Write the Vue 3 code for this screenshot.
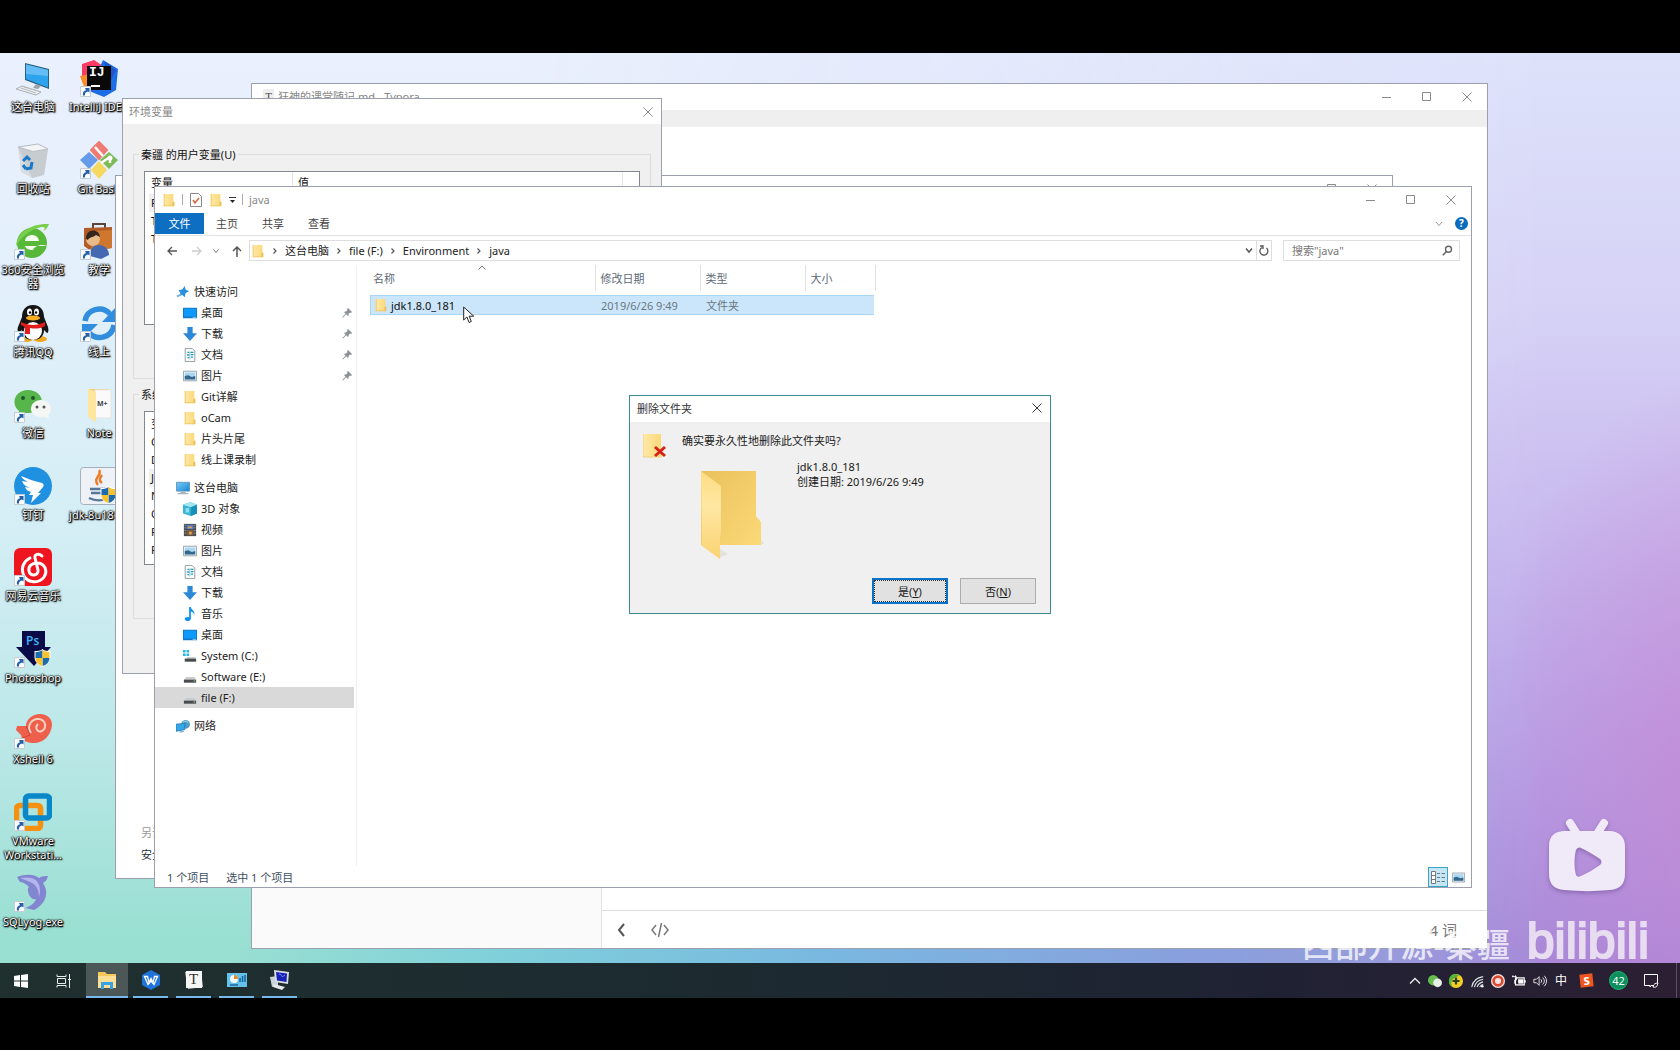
<script setup>
const leftIcons = [
  { id: 'd-pc', label: ['这台电脑'] },
  { id: 'd-bin', label: ['回收站'] },
  { id: 'd-360', label: ['360安全浏览', '器'], link: true },
  { id: 'd-qq', label: ['腾讯QQ'], link: true },
  { id: 'd-wechat', label: ['微信'], link: true },
  { id: 'd-ding', label: ['钉钉'], link: true },
  { id: 'd-music', label: ['网易云音乐'], link: true },
  { id: 'd-ps', label: ['Photoshop'], link: true, mark: 'Ps' },
  { id: 'd-xshell', label: ['Xshell 6'], link: true },
  { id: 'd-vm', label: ['VMware', 'Workstati...'], link: true },
  { id: 'd-sql', label: ['SQLyog.exe'], link: true },
]
const rightIcons = [
  { id: 'd-ij', label: ['IntelliJ IDEA'], link: true, mark: 'IJ' },
  { id: 'd-git', label: ['Git Bash'], link: true },
  { id: 'd-teach', label: ['教学'], link: true },
  { id: 'd-sync', label: ['线上'], link: true },
  { id: 'd-note', label: ['Note'], mark: 'M+' },
  { id: 'd-java', label: ['jdk-8u181...'] },
]
const navGroups = [
  {
    title: '快速访问', icon: 's-star',
    items: [
      { text: '桌面', icon: 's-desk', pin: true },
      { text: '下载', icon: 's-down', pin: true },
      { text: '文档', icon: 's-doc', pin: true },
      { text: '图片', icon: 's-pic', pin: true },
      { text: 'Git详解', icon: 's-folder' },
      { text: 'oCam', icon: 's-folder' },
      { text: '片头片尾', icon: 's-folder' },
      { text: '线上课录制', icon: 's-folder' },
    ],
  },
  {
    title: '这台电脑', icon: 's-pc',
    items: [
      { text: '3D 对象', icon: 's-cube' },
      { text: '视频', icon: 's-video' },
      { text: '图片', icon: 's-pic' },
      { text: '文档', icon: 's-doc' },
      { text: '下载', icon: 's-down' },
      { text: '音乐', icon: 's-note' },
      { text: '桌面', icon: 's-desk' },
      { text: 'System (C:)', icon: 's-sysdrive' },
      { text: 'Software (E:)', icon: 's-drive' },
      { text: 'file (F:)', icon: 's-drive', active: true },
    ],
  },
  { title: '网络', icon: 's-net', items: [] },
]
const crumbs = ['这台电脑', 'file (F:)', 'Environment', 'java']
const userVars = ['P', 'T', 'T']
const sysVars = ['变', 'C', 'D', 'J', 'N', 'O', 'P', 'P']
const tasks = ['t-folder', 't-wps', 't-typora', 't-panel', 't-remote']
const tray = ['y-wechat', 'y-plus', 'y-wifi', 'y-rec', 'y-batt', 'y-vol']
</script>

<template>
  <div class="screen">
    <svg class="sprite" width="0" height="0" aria-hidden="true">
      <defs>
        <linearGradient id="g-fold" x1="0" y1="0" x2="1" y2="0"><stop offset="0" stop-color="#ffe9a6" /><stop offset="1" stop-color="#fbd878" /></linearGradient>
        <linearGradient id="g-blue" x1="0" y1="0" x2="1" y2="1"><stop offset="0" stop-color="#7cc8f5" /><stop offset="1" stop-color="#1689d8" /></linearGradient>
        <linearGradient id="g-back" x1="0" y1="0" x2="1" y2="1"><stop offset="0" stop-color="#e9c15c" /><stop offset="1" stop-color="#fcd977" /></linearGradient>
        <linearGradient id="g-flap" x1="0" y1="0" x2="0" y2="1"><stop offset="0" stop-color="#fddc82" /><stop offset=".4" stop-color="#ffe7a3" /><stop offset="1" stop-color="#fbd372" /></linearGradient>
      </defs>
      <symbol id="w-min" viewBox="0 0 10 10"><path d="M0 5.500h9" stroke="currentColor" fill="none" /></symbol>
      <symbol id="w-max" viewBox="0 0 10 10"><path d="M.5.5h8v8h-8z" stroke="currentColor" fill="none" /></symbol>
      <symbol id="w-close" viewBox="0 0 10 10"><path d="M.5.5l9 9M9.500.5l-9 9" stroke="currentColor" fill="none" /></symbol>
      <symbol id="shield" viewBox="0 0 16 18"><path d="M8 0c2 2 5 2 8 2v6c0 5-4 8-8 10C4 16 0 13 0 8V2c3 0 6 0 8-2z" fill="#fff" /><path d="M8 1v8H1V3c3 0 5-.5 7-2zM8 9h7c0 4-3 7-7 8z" fill="#1d6dae" /><path d="M8 1c2 1.500 4 2 7 2v6H8zM1 9h7v8c-4-1-7-4-7-8z" fill="#f9c22f" /></symbol>
      <symbol id="shortcut" viewBox="0 0 11 11"><path d="M.5.5h10v10H.5z" fill="#fafcff" stroke="#c4ccd4" /><path d="M3 9.500C2.500 6 4 4.500 6 4.200L5 2h4.500v4.500L8 5.500C6 6 4.500 7 5 9.500z" fill="#2560a8" /></symbol>

      <symbol id="s-folder" viewBox="0 0 16 16"><path d="M2 1h11v9h1v5H2z" fill="url(#g-fold)" /><path d="M12 10h2v5h-2z" fill="#e9bd55" /><path d="M2 14.500h11M2.500 1v14" stroke="#eec868" /></symbol>
      <symbol id="s-star" viewBox="0 0 16 16"><path d="M10 1l1 4 4 2-4 2-1 5-3-3-3 1 1-3-2-3 4-1z" fill="#2a8fdc" /><path d="M1 13l5-2" stroke="#68b2e8" stroke-width="2" /></symbol>
      <symbol id="s-desk" viewBox="0 0 16 16"><path d="M0 2h16v12H0z" fill="#1478c4" /><path d="M1 3h14v9H1z" fill="#0d9afc" /><path d="M11 13h4" stroke="#9bd4fa" /></symbol>
      <symbol id="s-down" viewBox="0 0 16 16"><path d="M5 0h6v7h5l-8 9-8-9h5z" fill="#2b88d9" /></symbol>
      <symbol id="s-doc" viewBox="0 0 16 16"><path d="M2.500.5h8l3 3v12h-11z" fill="#f8fbfc" stroke="#8a9498" /><path d="M5 5h2M8.500 5H12M4.500 8h3M9 7.500h3M5 11h2M9 10.500h2.500" stroke="#2e9dbb" stroke-width="1.500" /><path d="M7.800 4v9" stroke="#7dbfd2" /></symbol>
      <symbol id="s-pic" viewBox="0 0 16 16"><path d="M.5 2.500h15v11H.5z" fill="#f3f6f8" stroke="#8d9aa3" /><path d="M2 4h12v8H2z" fill="#a9d6f3" /><path d="M2 8l4-1 4 2 4-1v4H2z" fill="#33688c" /></symbol>
      <symbol id="s-pc" viewBox="0 0 16 16"><path d="M.5 1.500h15v10H.5z" fill="url(#g-blue)" stroke="#5592b8" /><path d="M2 14.500h12M5 13h6" stroke="#a7b4bd" stroke-width="1.500" /></symbol>
      <symbol id="s-cube" viewBox="0 0 16 16"><path d="M0 3l9-3 7 3v10l-7 3-9-3z" fill="#3ab4d4" /><path d="M0 3l9-3 7 3-7 3z" fill="#a3e6f2" /><path d="M9 6l7-3v10l-7 3z" fill="#1690b8" /><path d="M3 7h4v5H3z" fill="#8fe0ee" /></symbol>
      <symbol id="s-video" viewBox="0 0 16 16"><path d="M1 1h14v14H1z" fill="#4b4d52" /><path d="M4 2h8v5H4z" fill="#587ec6" /><path d="M4 8h8v6H4z" fill="#7b5e45" /><path d="M6 4h4v2H6zM7 10h3v3H7z" fill="#e6a53e" /><path d="M2.500 2v12M13.500 2v12" stroke="#d4d4d4" stroke-dasharray="1 2" /></symbol>
      <symbol id="s-note" viewBox="0 0 16 16"><path d="M7 0h2c0 3 5 4 4 9-1-3-3-3.500-4-3.500V13c0 2-2 3-4 3s-3-1-3-2.500S4 11 7 11.500z" fill="#0c94ea" /></symbol>
      <symbol id="s-drive" viewBox="0 0 16 16"><path d="M4 8h9l2 3H1z" fill="#c8cacb" /><path d="M1 11h14v3.500H1z" fill="#484b4d" /><path d="M12 12.500h2" stroke="#9ee0a0" /></symbol>
      <symbol id="s-sysdrive" viewBox="0 0 16 16"><path d="M0 1h3v3H0zM4 1h3v3H4zM0 5h3v3H0zM4 5h3v3H4z" fill="#28b6dc" /><path d="M5 9h9l1 2H3z" fill="#c8cacb" /><path d="M2 11h13v3.500H2z" fill="#484b4d" /></symbol>
      <symbol id="s-net" viewBox="0 0 16 16"><circle cx="11" cy="6" r="5" fill="#4f9dc8" /><path d="M8 4c2-2 4-2 6 0" stroke="#b9e2f4" fill="none" /><path d="M0 6l10-1v7l-10 2z" fill="#35a8ea" stroke="#2279b0" /><path d="M4 15l5-1" stroke="#7eb4d2" stroke-width="1.500" /></symbol>
      <symbol id="s-pin" viewBox="0 0 10 10"><path d="M6 0l4 4-1 1-1-.5L6.500 6c.3 1 0 1.500-.5 2L4.200 6.300 1 9.500.3 9l3.300-3.300L2 4c.5-.5 1-.8 2-.5L5.500 2 5 1z" fill="#8b9196" /></symbol>

      <symbol id="d-pc" viewBox="0 0 38 38"><path d="M11 4l24 6v20L11 21z" fill="#2a5f80" /><path d="M12 5.500l22 5.500v17.500L12 20z" fill="#2ea3ee" /><path d="M12 5.500l22 5.500v6L12 15z" fill="#64bdf4" /><path d="M22 25l5 2-3 3-5-1z" fill="#9aa4aa" /><path d="M8 27l19 6-5 3L2 30z" fill="#eceff1" stroke="#a9b1b7" /><path d="M7 29l15 5M10 28l14 4" stroke="#b4bcc2" /></symbol>
      <symbol id="d-bin" viewBox="0 0 38 38"><path d="M4 6l20-3 10 5-4 26-12 3-11-6z" fill="#d9dde1" /><path d="M4 6l15 4 15-2-4 26-12 3z" fill="#bfc5cb" opacity=".7" /><path d="M4 6l20-3 10 5-15 2.500z" fill="#f3f5f6" stroke="#b8bec4" /><path d="M9 20l4-4 3 3M18 21l-1 6-5 1M12 28l-3-4" stroke="#1879c8" stroke-width="3" fill="none" /></symbol>
      <symbol id="d-360" viewBox="0 0 38 38"><circle cx="18" cy="21" r="15" fill="#57b83a" /><path d="M11 19c1-8 13-8 14 0zM11 24h22c-4-2-12-1-14 4-4 0-7-1-8-4z" fill="#f4fff0" /><path d="M2 24C3 10 18 1 35 2c-2 5-4 6-6 7 2-2 2-3 1-4C20 5 8 13 2 24z" fill="#79cf49" /></symbol>
      <symbol id="d-qq" viewBox="0 0 38 38"><ellipse cx="12" cy="35" rx="7" ry="3" fill="#f4a81d" /><ellipse cx="26" cy="35" rx="7" ry="3" fill="#f4a81d" /><path d="M19 1c8 0 11 6 11 12l4 10c1 4 0 6-1 6l-3-3c0 6-4 10-11 10S8 32 8 26l-3 3c-1 0-2-3-1-6l4-10C8 7 11 1 19 1z" fill="#151515" /><ellipse cx="19" cy="27" rx="9" ry="9" fill="#fff" /><ellipse cx="15.500" cy="8" rx="2.500" ry="3.500" fill="#fff" /><ellipse cx="22.500" cy="8" rx="2.500" ry="3.500" fill="#fff" /><circle cx="16" cy="8.500" r="1.200" /><circle cx="22" cy="8.500" r="1.200" /><ellipse cx="19" cy="14" rx="7" ry="2.500" fill="#f6ae22" /><path d="M7 18c8 4 16 4 24 0v4c-5 3-10 3-15 2v6h-5v-7l-4-2z" fill="#e21b1b" /></symbol>
      <symbol id="d-wechat" viewBox="0 0 38 38"><path d="M14 5c8 0 14 5 14 12s-6 11-14 11l-6 0-4 3 1-5C-4 19 1 5 14 5z" fill="#57b64b" /><circle cx="9" cy="13" r="2" fill="#20552a" /><circle cx="19" cy="13" r="2" fill="#20552a" /><path d="M27 15c6 0 10 4 10 9 0 3-2 5-3 6l1 4-4-2c-9 1-14-3-14-8s4-9 10-9z" fill="#f5f7f5" /><circle cx="23" cy="22" r="1.500" fill="#555" /><circle cx="30" cy="22" r="1.500" fill="#555" /></symbol>
      <symbol id="d-ding" viewBox="0 0 38 38"><circle cx="19" cy="19" r="19" fill="#2090e0" /><path d="M7 9c7 3 13 5 21 7 2 1 2 2 1 4l-5 6h3L17 36l2-8h-4l2-3c-4-1-5-3-6-5l5 1c-5-2-7-4-8-7l6 1c-4-2-6-4-7-6z" fill="#fff" /></symbol>
      <symbol id="d-music" viewBox="0 0 38 38"><rect width="38" height="38" rx="6" fill="#ee1520" /><path d="M28 8c-3-3-8-2-7 2l3 12c1 6-8 7-9 1-1-5 3-8 8-8 8 0 11 8 7 14-5 7-16 6-20-1-4-8 0-15 6-18" fill="none" stroke="#fff" stroke-width="3" stroke-linecap="round" /></symbol>
      <symbol id="d-ps" viewBox="0 0 38 38"><path d="M8 1h23v16h6L20 36 2 17h6z" fill="#0b0b47" /><use href="#shield" x="20" y="19" width="17" height="18" /></symbol>
      <symbol id="d-xshell" viewBox="0 0 38 38"><path d="M3 15l9 0c0-6 6-12 14-12 7 0 12 4 12 11-1 11-9 18-18 18-7 0-12-2-13-8L2 19z" fill="#ee604b" /><path d="M17 22c-5-7 1-15 8-14 7 1 8 9 3 12-4 2-8-3-4-7" fill="none" stroke="#fad0c3" stroke-width="2" /><path d="M12 15l4 9-10 4" fill="none" stroke="#d43f33" /></symbol>
      <symbol id="d-vm" viewBox="0 0 38 38"><rect x="2.500" y="12.500" width="24" height="23" rx="3" fill="none" stroke="#f5910f" stroke-width="5.500" /><rect x="11.500" y="3" width="24" height="22" rx="3" fill="none" stroke="#0a87c9" stroke-width="5.500" /><path d="M20 12.500h5q2 0 2 3v5" fill="none" stroke="#f5910f" stroke-width="4" /></symbol>
      <symbol id="d-sql" viewBox="0 0 38 38"><path d="M3 3c8-3 17-3 22 1 3-2 6-2 9-2-1 4-3 6-5 7 6 9 4 20-9 27l-9-2c6-2 10-5 11-9-3 1-5-1-7-4-1-4-2-6 0-8C11 9 8 8 6 8z" fill="#8285cf" /><path d="M6 4c6-1 12-1 16 2 4 5 5 10 3 17 0-7-3-13-9-15" fill="#b3b6ec" /></symbol>
      <symbol id="d-ij" viewBox="0 0 38 38"><path d="M2 5l12-4 9 6-9 22-12-6z" fill="#fb3b62" /><path d="M0 17l15-3 4 17-13 2z" fill="#fc8b29" /><path d="M23 1l15 9-2 21-12 7-15-6z" fill="#1d6ee6" /><path d="M24 2l12 9-6 12z" fill="#2255c8" /><rect x="7" y="7" width="24" height="24" fill="#0a0a0a" /><path d="M11 27h9" stroke="#fff" stroke-width="2" /></symbol>
      <symbol id="d-git" viewBox="0 0 38 38"><path d="M19 1l8 8-8 9-8-9z" fill="#ef7c74" stroke="#ef7c74" stroke-width="2" stroke-linejoin="round" /><path d="M9 11l9 8-9 9-9-9z" fill="#659be8" /><path d="M29 11l9 8-9 9-9-9z" fill="#7dba58" /><path d="M19 20l8 9-8 9-8-9z" fill="#f6d860" /><path d="M15 6l8 9M21 22l9-6M30 16v6" stroke="#fff" stroke-width="2.500" /><circle cx="30" cy="17" r="2.500" fill="#fff" /></symbol>
      <symbol id="d-teach" viewBox="0 0 38 38"><path d="M13 6V2h12v4" fill="none" stroke="#5b463b" stroke-width="2" /><path d="M4 6l28-1v21l-21 3-7-5z" fill="#b35b26" /><path d="M11 9l21-1v18l-21 3z" fill="#cf762f" /><circle cx="13" cy="17" r="7" fill="#e9bb8b" /><path d="M6 17c-1-10 13-12 14-2l-4-2c-4 3-7 2-8 5z" fill="#35251c" /><path d="M10 34c0-8 4-11 9-11s10 4 10 10l-8 4z" fill="#4569b0" /></symbol>
      <symbol id="d-sync" viewBox="0 0 38 38"><path d="M5 17C7 5 22 1 30 10" fill="none" stroke="#318ede" stroke-width="5.500" /><path d="M37 2v16H22z" fill="#318ede" /><path d="M34 21c-2 13-17 16-25 8" fill="none" stroke="#318ede" stroke-width="5.500" /><path d="M2 36V20h16z" fill="#318ede" /></symbol>
      <symbol id="d-note" viewBox="0 0 38 38"><path d="M8 4h21v26H8z" fill="#f5d278" /><path d="M15 5h16v28H15z" fill="#fafafa" stroke="#e5e5e5" /><path d="M8 4l8 3v30l-8-5z" fill="#ffe6a0" /></symbol>
      <symbol id="d-java" viewBox="0 0 38 38"><rect x=".5" y=".5" width="40" height="37" rx="3" fill="#eef1f5" stroke="#a6b0bd" /><path d="M19 3c4 5-7 8-1 15M22 8c-3 4-3 6 0 8" fill="none" stroke="#ea7d2b" stroke-width="2.500" /><path d="M10 22h16M11 26h14M9 31c6 3 14 3 20 0M27 22c5-1 4 4-1 4" fill="none" stroke="#55789d" stroke-width="2.500" /><use href="#shield" x="20" y="19" width="17" height="18" /></symbol>

      <symbol id="t-folder" viewBox="0 0 20 20"><path d="M1 2h7l2 2h9v14H1z" fill="#f6c85a" /><path d="M1 6h18v12H1z" fill="#fde095" /><path d="M4 12h12v7h-3v-4H7v4H4z" fill="#36a4e4" /></symbol>
      <symbol id="t-wps" viewBox="0 0 20 20"><path d="M10 0l9 5v10l-9 5-9-5V5z" fill="#2173dc" /><path d="M3.500 6.500h3l1.500 6 2-4 2 4 1.500-6h3l-3.500 8-3-3.500L7 14.500z" fill="none" stroke="#fff" stroke-width="1.300" /></symbol>
      <symbol id="t-typora" viewBox="0 0 20 20"><path d="M1 2l16-1 2 16-15 2z" fill="#c7c7c7" /><path d="M2 1h16v17H2z" fill="#f5f5f5" /></symbol>
      <symbol id="t-panel" viewBox="0 0 20 20"><path d="M0 3h20v14H0z" fill="#64c1ec" /><circle cx="7" cy="9" r="4" fill="#f2f8fa" /><path d="M7 9V5a4 4 0 0 1 4 4z" fill="#e58a30" /><path d="M13 12V8M15.500 12V6M18 12V5M3 15h8" stroke="#186699" stroke-width="1.500" /></symbol>
      <symbol id="t-remote" viewBox="0 0 20 20"><path d="M0 7l8-1v9l-6 2z" fill="#cbd3da" /><path d="M4 0l15 2-1 12L5 12z" fill="#d9dee5" /><path d="M6 2l11 1.500-.5 8.500L7 10.500z" fill="#1722b8" /><path d="M9 4c4 0 1 5 6 1" stroke="#7d96ff" fill="none" /><path d="M4 14l11 3-3 3-9-3z" fill="#e6e9ec" /></symbol>

      <symbol id="y-wechat" viewBox="0 0 16 16"><circle cx="6" cy="7" r="6" fill="#68bd4f" /><circle cx="11" cy="10" r="5" fill="#e9efe8" /></symbol>
      <symbol id="y-plus" viewBox="0 0 16 16"><circle cx="8" cy="8" r="8" fill="#f4cd26" /><path d="M8 0a8 8 0 0 0-4 15C0 7 6 4 12 2z" fill="#55b53c" /><path d="M8 4v8M4 8h8" stroke="#24421c" stroke-width="2.500" /></symbol>
      <symbol id="y-wifi" viewBox="0 0 16 16"><path d="M2 15C3 8 8 4 15 3M5 15c1-5 4-8 10-9M8 15c1-3 3-5 7-6M11 15c1-2 2-3 4-3" fill="none" stroke="#dce2e6" stroke-width="1.200" /><circle cx="14" cy="14" r="1.500" fill="#fff" /></symbol>
      <symbol id="y-rec" viewBox="0 0 16 16"><circle cx="8" cy="8" r="8" fill="#f5e4e0" /><circle cx="8" cy="8" r="5" fill="none" stroke="#d9482f" stroke-width="3" /></symbol>
      <symbol id="y-batt" viewBox="0 0 16 16"><path d="M4 4.500h10v8H4zM15 7v3" fill="none" stroke="#fff" stroke-width="1.300" /><path d="M7 6h6v5H7z" fill="#fff" /><path d="M0 3h5v4H3v4M1 1.500v2M4 1.500v2" stroke="#fff" fill="none" /></symbol>
      <symbol id="y-vol" viewBox="0 0 16 16"><path d="M1 6h3l3-3v10l-3-3H1zM9 6q2 2 0 4M11 4q4 4 0 8M13 2q5 6 0 12" fill="none" stroke="#f2f2f2" /></symbol>
    </svg>

    <main class="desktop">
      <div class="icons">
        <div v-for="(col, c) in [leftIcons, rightIcons]" :key="c" class="icon-col">
          <a v-for="it in col" :key="it.id" href="#" class="shortcut">
            <span class="pic">
              <svg width="38" height="38"><use :href="'#' + it.id" /></svg>
              <span v-if="it.mark" class="mark" :class="it.id">{{ it.mark }}</span>
              <svg v-if="it.link" class="arrow" width="11" height="11"><use href="#shortcut" /></svg>
            </span>
            <span v-for="l in it.label" :key="l" class="cap">{{ l }}</span>
          </a>
        </div>
      </div>

      <section class="win typora">
        <header class="bar">
          <span class="ty-mark">T</span><span class="ty-title">狂神的课堂随记.md - Typora</span>
          <button v-for="b in ['w-min', 'w-max', 'w-close']" :key="b" class="wbtn" :aria-label="b"><svg width="10" height="10"><use :href="'#' + b" /></svg></button>
        </header>
        <div class="ty-menu"></div>
        <div class="ty-body">
          <aside class="ty-side"></aside>
          <div class="ty-main">
            <footer class="ty-foot">
              <button class="plain" aria-label="返回"><svg width="10" height="16" viewBox="0 0 10 16"><path d="M8 2L3 8l5 6" fill="none" stroke="#555" stroke-width="2" /></svg></button>
              <button class="plain" aria-label="源代码"><svg width="20" height="16" viewBox="0 0 20 16"><path d="M6 3L2 8l4 5M14 3l4 5-4 5M11.500 1l-3 14" fill="none" stroke="#777" stroke-width="1.500" /></svg></button>
              <span class="words">4 词</span>
            </footer>
          </div>
        </div>
      </section>

      <section class="win system">
        <header class="bar">
          <span class="grow"></span>
          <button v-for="b in ['w-max', 'w-close']" :key="b" class="wbtn" :aria-label="b"><svg width="10" height="10"><use :href="'#' + b" /></svg></button>
        </header>
        <div class="see-also"><span>另请</span><a href="#">安全</a></div>
      </section>

      <section class="win env">
        <header class="bar"><span class="env-title">环境变量</span><button class="wbtn slim" aria-label="关闭"><svg width="10" height="10"><use href="#w-close" /></svg></button></header>
        <div class="env-body">
          <fieldset>
            <legend>秦疆 的用户变量(U)</legend>
            <div class="list user">
              <div class="lhead"><span class="lname">变量</span><span class="lval">值</span></div>
              <span v-for="(v, i) in userVars" :key="i" class="lrow" :class="{ hot: i === 0 }">{{ v }}</span>
            </div>
          </fieldset>
          <fieldset>
            <legend>系统</legend>
            <div class="list sys">
              <span v-for="(v, i) in sysVars" :key="i" class="lrow" :class="{ hot: i === 3 }">{{ v }}</span>
            </div>
          </fieldset>
        </div>
      </section>

      <section class="win explorer">
        <header class="bar">
          <div class="quick">
            <svg width="14" height="14"><use href="#s-folder" /></svg><i></i>
            <svg width="14" height="14" viewBox="0 0 14 14"><path d="M1.500.5h8l3 3v10h-11z" fill="#fff" stroke="#8a8a8a" /><path d="M4 7l2 3 4-5" fill="none" stroke="#d5673a" stroke-width="1.500" /></svg>
            <svg width="14" height="14"><use href="#s-folder" /></svg>
            <svg width="7" height="8" viewBox="0 0 7 8"><path d="M0 1.500h7" stroke="#333" /><path d="M1 4h5L3.500 7z" fill="#222" /></svg><i></i>
          </div>
          <span class="ex-title">java</span>
          <button v-for="b in ['w-min', 'w-max', 'w-close']" :key="b" class="wbtn" :aria-label="b"><svg width="10" height="10"><use :href="'#' + b" /></svg></button>
        </header>
        <nav class="tabs">
          <button class="tab file">文件</button><button class="tab">主页</button><button class="tab">共享</button><button class="tab">查看</button>
          <span class="grow"></span>
          <svg width="8" height="6" viewBox="0 0 8 6"><path d="M1 1l3 3.500L7 1" fill="none" stroke="#999" /></svg>
          <button class="help">?</button>
        </nav>
        <div class="addr-row">
          <div class="arrows">
            <svg width="12" height="12" viewBox="0 0 12 12"><path d="M6 2L2 6l4 4M2 6h9" fill="none" stroke="#555" stroke-width="1.300" /></svg>
            <svg width="12" height="12" viewBox="0 0 12 12"><path d="M7 2l4 4-4 4M11 6H2" fill="none" stroke="#ccc" stroke-width="1.300" /></svg>
            <svg width="6" height="6" viewBox="0 0 6 6"><path d="M.5 1.500L3 4.500l2.500-3" fill="none" stroke="#777" /></svg>
            <svg width="12" height="12" viewBox="0 0 12 12"><path d="M2 6l4-4 4 4M6 2v10" fill="none" stroke="#555" stroke-width="1.500" /></svg>
          </div>
          <div class="address">
            <svg width="14" height="14"><use href="#s-folder" /></svg>
            <template v-for="c in crumbs" :key="c">
              <svg class="sep" width="6" height="8" viewBox="0 0 6 8"><path d="M1.500 1.500L4 4 1.500 6.500" fill="none" stroke="#555" stroke-width="1.200" /></svg>
              <button class="crumb">{{ c }}</button>
            </template>
            <span class="grow"></span>
            <button class="abtn" aria-label="展开"><svg width="8" height="7" viewBox="0 0 8 7"><path d="M1 1.500l3 3.500 3-3.500" fill="none" stroke="#555" stroke-width="1.500" /></svg></button>
            <button class="abtn ref" aria-label="刷新"><svg width="10" height="11" viewBox="0 0 10 11"><path d="M3 2.500A4 4 0 1 0 7.500 3M1 1h3v3" fill="none" stroke="#555" stroke-width="1.300" /></svg></button>
          </div>
          <label class="search">
            <input type="text" placeholder="搜索&quot;java&quot;" aria-label="搜索" />
            <svg width="11" height="11" viewBox="0 0 11 11"><circle cx="6.500" cy="4.200" r="3" fill="none" stroke="#666" stroke-width="1.400" /><path d="M4.500 6.500L.8 10.200" stroke="#666" stroke-width="1.600" /></svg>
          </label>
        </div>
        <div class="ex-body">
          <aside class="nav">
            <div v-for="g in navGroups" :key="g.title" class="group">
              <a href="#" class="nitem top"><svg width="14" height="14"><use :href="'#' + g.icon" /></svg>{{ g.title }}</a>
              <a v-for="n in g.items" :key="n.text" href="#" class="nitem" :class="{ active: n.active }">
                <svg width="14" height="14"><use :href="'#' + n.icon" /></svg>{{ n.text }}
                <svg v-if="n.pin" class="pin" width="10" height="10"><use href="#s-pin" /></svg>
              </a>
            </div>
          </aside>
          <div class="files">
            <table>
              <colgroup><col class="c1" /><col class="c2" /><col class="c3" /><col class="c4" /></colgroup>
              <thead>
                <tr>
                  <th>名称<svg class="sort" width="8" height="5" viewBox="0 0 8 5"><path d="M.5 4.500L4 1l3.500 3.500" fill="none" stroke="#777" /></svg></th>
                  <th>修改日期</th><th>类型</th><th>大小</th>
                </tr>
              </thead>
              <tbody>
                <tr class="space"><td colspan="4"></td></tr>
                <tr class="sel">
                  <td><span class="fname"><svg width="14" height="14"><use href="#s-folder" /></svg>jdk1.8.0_181</span></td>
                  <td>2019/6/26 9:49</td><td>文件夹</td><td></td>
                </tr>
              </tbody>
            </table>
            <svg class="cursor" width="12" height="18" viewBox="0 0 12 18"><path d="M.7 1v13l3.200-3 2.200 5.500 2.200-1L6.200 10.200h4.500z" fill="#fff" stroke="#222" /></svg>
          </div>
        </div>
        <footer class="status">
          <span>1 个项目</span><span>选中 1 个项目</span><span class="grow"></span>
          <button class="view on" aria-label="详细信息"><svg width="15" height="13" viewBox="0 0 15 13"><path d="M.5.500h4v12h-4zM.5 4.500h4M.5 8.500h4" fill="#fff" stroke="#777" /><path d="M6 2.500h3M10.500 2.500H14M6 6.500h3M10.500 6.500H14M6 10.500h3M10.500 10.500H14" stroke="#667b88" /></svg></button>
          <button class="view" aria-label="缩略图"><svg width="13" height="13"><use href="#s-pic" /></svg></button>
        </footer>
      </section>

      <section class="dialog" role="dialog" aria-label="删除文件夹">
        <header><span>删除文件夹</span><button class="plain" aria-label="关闭"><svg width="10" height="10"><use href="#w-close" /></svg></button></header>
        <div class="d-body">
          <svg width="24" height="26" viewBox="0 0 24 26"><path d="M0 1h18v15h1v8H0z" fill="url(#g-fold)" /><path d="M0 1v23h18" fill="none" stroke="#f0d083" /><path d="M12 14l10 9M22 14l-10 9" stroke="#d32218" stroke-width="3" /></svg>
          <div class="d-main">
            <p>确实要永久性地删除此文件夹吗?</p>
            <div class="d-info">
              <svg width="66" height="92" viewBox="0 0 66 92"><path d="M19 88l9-4-9-6zM58 74l6 0-4-6z" fill="#d9d4c8" opacity=".5" /><path d="M1 1h55v45l5 6v23H1z" fill="url(#g-back)" /><path d="M1 1l20 15v48l-1 2v23L2 76z" fill="url(#g-flap)" /></svg>
              <div class="d-text"><span>jdk1.8.0_181</span><span>创建日期: 2019/6/26 9:49</span></div>
            </div>
          </div>
        </div>
        <div class="d-btns"><button class="dbtn yes">是(<u>Y</u>)</button><button class="dbtn">否(<u>N</u>)</button></div>
      </section>

      <div class="owner">西部开源-秦疆</div>
      <div class="brand">
        <svg width="78" height="76" viewBox="0 0 78 76"><path d="M22 5l7 11M56 5l-7 11" stroke="#f0e9f8" stroke-width="8" stroke-linecap="round" /><path fill-rule="evenodd" d="M17 13h44c11 0 16 7 16 15v28c0 10-5 15-15 16-15 1.500-30 1.500-46 0C6 71 1 66 1 56V28c0-10 6-15 16-15zM28 32c-2 7-2 18 0 25 1 2 3 2 5 1 7-3 13-7 19-11 2-2 2-4 0-6-6-4-12-8-19-11-2-1-4 0-5 2z" fill="#f0e9f8" /></svg>
      </div>
      <div class="logo">bilibili</div>
    </main>

    <footer class="taskbar">
      <button class="tb start" aria-label="开始"><svg width="14" height="14" viewBox="0 0 14 14"><path d="M0 2l6-1v5.500H0zM7 .9L14 0v6.500H7zM0 7.500h6V13l-6-1zM7 7.500h7V14l-7-1z" fill="#fff" /></svg></button>
      <button class="tb start" aria-label="任务视图"><svg width="15" height="14" viewBox="0 0 15 14"><path d="M1.500 4.500h8v5h-8zM1 .500v2h9v-2M1 13.500v-2h9v2M13.500 0v14M12 5.500h3" fill="none" stroke="#e9eeee" /></svg></button>
      <button v-for="(t, i) in tasks" :key="t" class="tb task" :class="{ cur: i === 0 }" :aria-label="t"><svg width="20" height="20"><use :href="'#' + t" /></svg><span v-if="t === 't-typora'" class="tmark">T</span></button>
      <span class="grow"></span>
      <div class="tray">
        <svg width="12" height="8" viewBox="0 0 12 8"><path d="M1 6.500L6 1.500l5 5" fill="none" stroke="#eee" stroke-width="1.300" /></svg>
        <svg v-for="y in tray" :key="y" width="14" height="14"><use :href="'#' + y" /></svg>
        <span class="ime">中</span>
      </div>
      <span class="sogou">S</span>
      <span class="count">42</span>
      <svg class="notice" width="15" height="16" viewBox="0 0 15 16"><path d="M10 12.500H7l-1 1.500v-1.500H.5v-11h13V10" fill="none" stroke="#fff" /><path d="M9 14c0-3 3-4 5-4-1 3-1 5-5 4z" fill="none" stroke="#fff" /></svg>
      <span class="edge"></span>
    </footer>
  </div>
</template>

<style>
body { margin: 0; background: #000; }
</style>

<style scoped>
* { box-sizing: border-box; }
.screen {
  display: flex; flex-direction: column; height: 100vh; min-height: 1050px; padding: 53px 0 52px;
  background: #000; color: #222;
  font: 11px/15px "Noto Sans", "Noto Sans CJK SC", sans-serif;
}
.sprite { position: absolute; }
button { border: 0; padding: 0; background: none; font: inherit; color: inherit; }
a { color: inherit; text-decoration: none; }
svg { display: block; flex: none; }
.grow { flex: 1; }
.desktop {
  position: relative; flex: 1; overflow: hidden;
  background: linear-gradient(180deg, #eaf0fd 0%, #e3f0fb 25%, #d5eef5 52%, #bce8e8 75%, #99dfd2 97%);
}
.desktop::before {
  content: ""; position: absolute; inset: 0;
  background:
    radial-gradient(ellipse 15% 45% at 103% 80%, rgba(200, 134, 210, .75) 0%, rgba(200, 134, 210, 0) 100%),
    linear-gradient(180deg, #dde2fa 0%, #d6d2f6 28%, #c8b9ee 52%, #b7a0e6 76%, #a688d8 100%);
  mask-image: linear-gradient(90deg, transparent 30%, #000 92%);
}
.desktop::after {
  content: ""; position: absolute; left: 14%; right: 8%; bottom: 0; height: 16px;
  background: linear-gradient(90deg, rgba(128, 212, 216, 0), #7fd0da 20%, #79b8e0 45%, #8a9edd 75%, rgba(162, 140, 220, 0));
}
.icons { position: absolute; z-index: 1; left: 0; top: 6px; bottom: 7px; display: flex; }
.icon-col { display: grid; grid-template-rows: repeat(11, 1fr); width: 66px; }
.shortcut { display: flex; flex-direction: column; align-items: center; min-height: 0; }
.pic { position: relative; margin-bottom: 3px; }
.arrow { position: absolute; left: 0; bottom: 0; }
.mark { position: absolute; left: 9px; top: 7px; color: #fff; font: 700 13px/14px "Liberation Mono", monospace; }
.mark.d-ps { left: 12px; top: 4px; color: #38bdf8; font: 600 12px/14px "Open Sans", sans-serif; }
.mark.d-note { left: 17px; top: 12px; color: #444; font: 700 7px/14px "Noto Sans", sans-serif; }
.cap { color: #fff; line-height: 14px; white-space: nowrap; text-shadow: 0 0 1px #000, 1px 1px 1px #000, 0 0 2px #000, 0 0 2px #000, 1px 1px 2px #222; }

.win { position: absolute; z-index: 1; display: flex; flex-direction: column; background: #fff; border: 1px solid #9c9fae; }
.bar { display: flex; align-items: center; height: 25px; flex: none; color: #888; }
.wbtn { display: flex; align-items: center; justify-content: center; width: 40px; height: 25px; color: #8b8b8b; }
.wbtn.slim { width: 27px; margin-left: auto; }
.plain { display: flex; align-items: center; }

.typora { left: 251px; right: 192px; top: 30px; bottom: 14px; }
.ty-mark { width: 11px; margin-left: 11px; background: #eee; text-align: center; font-family: "Liberation Serif", serif; color: #444; }
.ty-title { flex: 1; margin-left: 4px; }
.ty-menu { height: 17px; margin-top: 1px; background: #efefef; }
.ty-body { display: flex; flex: 1; }
.ty-side { width: 30%; max-width: 350px; background: #fafafa; border-right: 1px solid #e4e4e4; }
.ty-main { display: flex; flex: 1; flex-direction: column; justify-content: flex-end; }
.ty-foot { display: flex; align-items: center; gap: 24px; height: 38px; padding: 1px 30px 0 14px; border-top: 1px solid #ddd; }
.words { margin-left: auto; font-size: 15px; color: #777; }

.system { left: 115px; right: 287px; top: 122px; bottom: 84px; }
.see-also { display: flex; flex-direction: column; gap: 7px; margin-top: auto; padding: 0 25px 16px; white-space: nowrap; color: #999; }
.see-also a { color: #23303c; }

.env { left: 122px; top: 45px; width: 540px; height: 576px; background: #f0f0f0; }
.env .bar { background: #fff; }
.env-title { margin-left: 6px; }
.env-body { display: flex; flex-direction: column; gap: 8px; padding: 23px 10px; color: #111; }
fieldset { margin: 0; padding: 9px 10px 53px; border: 1px solid #dcdcdc; min-width: 0; }
legend { padding: 0 2px; margin-left: -5px; }
.list { display: flex; flex-direction: column; background: #fff; border: 1px solid #828790; }
.user { height: 154px; }
.sys { height: 154px; padding-top: 3px; }
.lhead { display: flex; height: 22px; line-height: 22px; padding-left: 6px; }
.lname { width: 141px; }
.lval { flex: 1; padding-left: 5px; margin-right: 16px; border: solid #e5e5e5; border-width: 0 1px; }
.lrow { width: 132px; line-height: 18px; margin-left: 4px; padding-left: 2px; }
.hot { background: #f0f0f0; }

.explorer { left: 154px; right: 208px; top: 133px; bottom: 75px; }
.quick { display: flex; align-items: center; gap: 6px; margin-left: 7px; }
.quick i { width: 1px; height: 11px; background: #aaa; }
.ex-title { flex: 1; margin-left: 6px; }
.tabs { display: flex; align-items: center; height: 24px; flex: none; padding: 1px 3px 1px 0; border-bottom: 1px solid #e3e3e3; }
.tab { width: 46px; height: 21px; color: #444; }
.tab.file { width: 49px; background: #0e6fc2; color: #fff; }
.help { width: 13px; height: 13px; margin-left: 12px; border-radius: 50%; background: #0b6cbd; color: #fff; font-size: 10px; line-height: 13px; font-weight: 700; }
.addr-row { display: flex; align-items: center; padding: 4px 11px 4px 0; flex: none; }
.arrows { display: flex; align-items: center; justify-content: space-between; width: 77px; margin: 0 6px 0 11px; }
.address { display: flex; align-items: center; flex: 1; height: 21px; padding-left: 1px; border: 1px solid #dedede; }
.sep { margin: 0 7px; }
.crumb { white-space: nowrap; }
.abtn { display: flex; align-items: center; justify-content: center; width: 15px; height: 19px; }
.abtn.ref { border-left: 1px solid #dedede; }
.search { display: flex; align-items: center; width: 177px; height: 21px; margin-left: 11px; padding: 0 6px 0 8px; border: 1px solid #dedede; }
.search input { flex: 1; min-width: 0; border: 0; padding: 0; outline: 0; font: inherit; background: none; }
.search input::placeholder { color: #777; opacity: 1; }
.ex-body { display: flex; flex: 1; min-height: 0; }
.nav { width: 202px; flex: none; padding-top: 16px; border-right: 1px solid #f1f1f1; }
.group { margin-bottom: 7px; }
.nitem { display: flex; align-items: center; gap: 4px; height: 21px; width: 199px; padding: 0 2px 0 28px; }
.nitem.top { padding-left: 21px; }
.active { background: #d9d9d9; }
.pin { margin-left: auto; }
.files { position: relative; flex: 1; padding: 0 0 0 13px; }
table { width: 505px; table-layout: fixed; border-collapse: collapse; }
.c1 { width: 225px; }
.c2, .c3 { width: 105px; }
.c4 { width: 70px; }
th { position: relative; height: 26px; padding: 0 0 0 5px; border-right: 1px solid #e3e3e3; text-align: left; font-weight: 400; color: #5d6a78; }
th:first-child { padding-left: 3px; }
.sort { position: absolute; left: 48%; top: 0; }
td { height: 20px; padding: 0 0 0 6px; }
.space td { height: 4px; padding: 0; }
.sel { background: #cbe6fa; color: #6a7681; box-shadow: inset 0 0 0 1px #a9d6f5; }
.sel td:last-child { border-right: 3px solid #fff; }
.fname { display: flex; align-items: center; gap: 3px; color: #111; margin-left: -2px; }
.cursor { position: absolute; left: 106px; top: 41px; }
.status { display: flex; align-items: center; height: 21px; flex: none; padding: 1px 3px 0 12px; color: #40505f; }
.status span + span { margin-left: 17px; }
.view { display: flex; align-items: center; justify-content: center; width: 20px; height: 20px; }
.view.on { background: #c6e6f4; border: 1px solid #3ba3c6; }

.dialog { position: absolute; z-index: 2; left: calc(50% - 211px); top: 342px; width: 422px; background: #f0f0f0; border: 1px solid #3b8a90; color: #1a1a1a; }
.dialog header { display: flex; align-items: center; justify-content: space-between; height: 26px; padding: 0 8px 2px 7px; background: #fff; color: #333; }
.d-body { display: flex; gap: 15px; padding: 11px 13px 0; }
.d-main p { margin: 0 0 11px; }
.d-info { display: flex; gap: 31px; padding-left: 18px; }
.d-info svg { margin-top: 11px; }
.d-text { display: flex; flex-direction: column; }
.d-btns { display: flex; justify-content: flex-end; gap: 12px; padding: 16px 14px 9px; }
.dbtn { width: 76px; height: 26px; background: #e1e1e1; border: 1px solid #adadad; }
.dbtn.yes { border: 2px solid #0a72c8; outline: 1px dotted #333; outline-offset: -3px; }

.owner { position: absolute; z-index: 3; right: 170px; bottom: 0; font-size: 33px; line-height: 36px; font-weight: 500; color: rgba(255, 255, 255, .75); white-space: nowrap; }
.brand { position: absolute; z-index: 3; right: 54px; bottom: 69px; filter: drop-shadow(0 2px 2px rgba(80, 50, 120, .4)); }
.logo { position: absolute; z-index: 3; right: 31px; bottom: -8px; font: 50px/60px "Liberation Sans", Arial, sans-serif; color: #e8dcf1; -webkit-text-stroke: 2px #e8dcf1; }

.taskbar { display: flex; align-items: center; flex: none; height: 35px; background: linear-gradient(90deg, #20302f 0%, #1c2b30 40%, #1f2233 75%, #2c1f33 100%); color: #fff; }
.tb { position: relative; display: flex; align-items: center; justify-content: center; height: 35px; width: 35px; flex: none; }
.start { width: 42px; }
.task { margin: 0 4px; border-bottom: 2px solid #76b9ed; }
.cur { width: 42px; margin: 0 1px 0 2px; background: #4b5857; }
.tmark { position: absolute; inset: 0; color: #333; font: 15px/33px "Liberation Serif", serif; text-align: center; }
.tray { display: flex; align-items: center; gap: 7px; }
.ime { font-size: 12px; width: 14px; text-align: center; }
.sogou { width: 13px; margin: 0 16px 0 12px; background: #ee5620; text-align: center; font-weight: 800; line-height: 13px; transform: rotate(-6deg); }
.count { width: 19px; height: 19px; margin-right: 16px; border: 1px solid #14b870; border-radius: 50%; background: #0c8f5c; text-align: center; line-height: 17px; }
.notice { margin-right: 17px; }
.edge { width: 1px; height: 100%; margin-right: 3px; background: #5a5060; }
</style>
